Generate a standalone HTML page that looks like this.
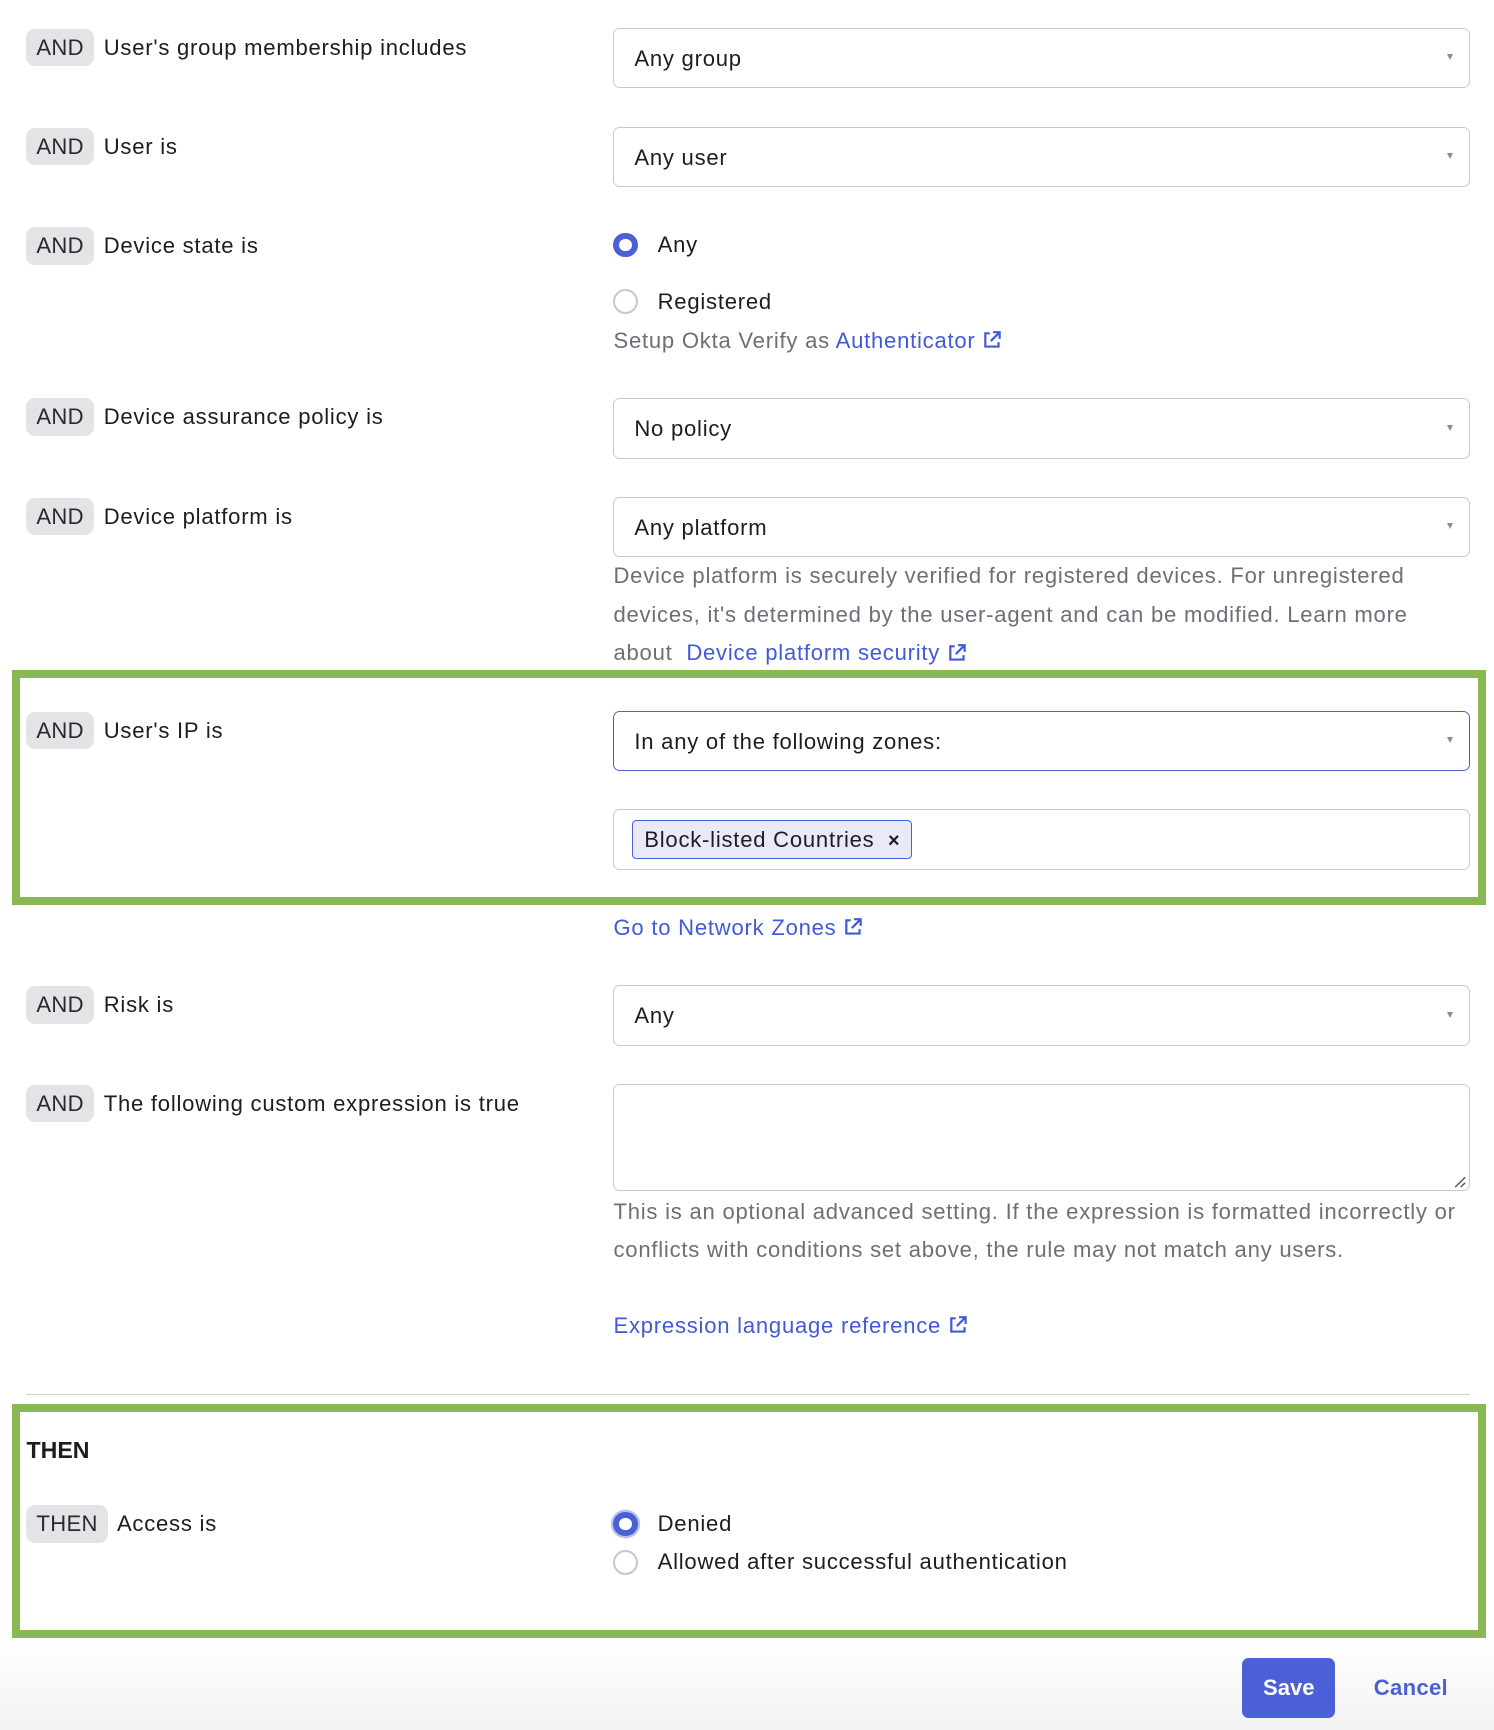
<!DOCTYPE html>
<html><head><meta charset="utf-8"><style>
html,body{margin:0;padding:0;background:#fff;}
body{width:1494px;height:1730px;overflow:hidden;position:relative;}
#w{position:absolute;left:0;top:0;width:1354px;height:1568px;zoom:1.10339;font-family:"Liberation Sans",sans-serif;color:#1d1d21;font-size:20px;letter-spacing:0.7px;}
.a{position:absolute;white-space:nowrap;}
.b{position:absolute;left:24px;height:34px;line-height:34px;padding:0 9px;background:#e4e4e6;border-radius:8px;color:#2a2a2e;font-size:20px;letter-spacing:0.3px;}
.l{position:absolute;left:94px;line-height:34px;white-space:nowrap;}
.s{position:absolute;left:556px;width:774px;height:53px;border:1px solid #c9c9ce;border-radius:6px;box-sizing:content-box;}
.s span{position:absolute;left:18px;top:0;line-height:55px;}
.s i{position:absolute;right:14px;top:23px;width:0;height:0;border-left:3px solid transparent;border-right:3px solid transparent;border-top:6px solid #8c8c94;}
.r{position:absolute;left:556px;width:19px;height:19px;border:2px solid #c6c6cc;border-radius:50%;}
.r.on{border:6px solid #4b5fd6;width:11px;height:11px;}
.g{color:#6e6e78;}
.k{color:#4259d8;}
.gb{position:absolute;left:11px;width:1321px;border:8px solid #88b955;}
svg.e{width:18px;height:18px;vertical-align:-2px;margin-left:6px;}
</style></head><body><div id="w">
<svg width="0" height="0" style="position:absolute"><defs><symbol id="ex" viewBox="0 0 18 18"><path d="M7 3H3v12h12v-4" fill="none" stroke="#4259d8" stroke-width="2"/><path d="M10 2h6v6M16 2L8 10" fill="none" stroke="#4259d8" stroke-width="2"/></symbol></defs></svg>

<div class="b" style="top:26px">AND</div><div class="l" style="top:26px">User's group membership includes</div>
<div class="s" style="top:25px"><span>Any group</span><i></i></div>

<div class="b" style="top:116px">AND</div><div class="l" style="top:116px">User is</div>
<div class="s" style="top:115px"><span>Any user</span><i></i></div>

<div class="b" style="top:206px">AND</div><div class="l" style="top:206px">Device state is</div>
<div class="r on" style="top:211px"></div><div class="a" style="left:596px;top:210px">Any</div>
<div class="r" style="top:262px"></div><div class="a" style="left:596px;top:262px">Registered</div>
<div class="a g" style="left:556px;top:297px">Setup Okta Verify as <span class="k">Authenticator<svg class="e"><use href="#ex"/></svg></span></div>

<div class="b" style="top:361px">AND</div><div class="l" style="top:361px">Device assurance policy is</div>
<div class="s" style="top:361px"><span>No policy</span><i></i></div>

<div class="b" style="top:451px">AND</div><div class="l" style="top:451px">Device platform is</div>
<div class="s" style="top:450px"><span>Any platform</span><i></i></div>
<div class="a g" style="left:556px;top:505px;line-height:35px;white-space:normal;width:735px">Device platform is securely verified for registered devices. For unregistered devices, it's determined by the user-agent and can be modified. Learn more about&nbsp; <span class="k" style="white-space:nowrap">Device platform security<svg class="e"><use href="#ex"/></svg></span></div>

<div class="gb" style="top:607px;height:199px"></div>
<div class="b" style="top:645px">AND</div><div class="l" style="top:645px">User's IP is</div>
<div class="s" style="top:644px;border-color:#4b5fd6"><span>In any of the following zones:</span><i></i></div>
<div class="s" style="top:733px;height:54px"></div>
<div class="a" style="left:573px;top:743px;height:34px;background:#e8eafa;border:1px solid #4b5fd6;border-radius:4px;line-height:34px;padding:0 10px;">Block-listed Countries <span style="font-weight:bold;font-size:18px;margin-left:6px">×</span></div>

<div class="a k" style="left:556px;top:829px">Go to Network Zones<svg class="e"><use href="#ex"/></svg></div>

<div class="b" style="top:894px">AND</div><div class="l" style="top:894px">Risk is</div>
<div class="s" style="top:893px"><span>Any</span><i></i></div>

<div class="b" style="top:983px">AND</div><div class="l" style="top:983px">The following custom expression is true</div>
<div class="s" style="top:982px;height:96px"><svg style="position:absolute;right:2px;bottom:2px" width="12" height="12"><path d="M11 2L2 11M11 7L7 11" stroke="#555" stroke-width="1.3"/></svg></div>
<div class="a g" style="left:556px;top:1081px;line-height:35px;white-space:normal;width:775px">This is an optional advanced setting. If the expression is formatted incorrectly or conflicts with conditions set above, the rule may not match any users.</div>
<div class="a k" style="left:556px;top:1190px">Expression language reference<svg class="e"><use href="#ex"/></svg></div>

<div class="a" style="left:24px;top:1263px;width:1308px;height:1px;background:#d4d4d8"></div>

<div class="gb" style="top:1272px;height:198px"></div>
<div class="a" style="left:24px;top:1302px;font-weight:bold;font-size:21px;letter-spacing:0">THEN</div>
<div class="b" style="top:1364px">THEN</div><div class="l" style="left:106px;top:1364px">Access is</div>
<div class="r on" style="top:1370px;box-shadow:0 0 0 2px #b9c1f0"></div><div class="a" style="left:596px;top:1369px">Denied</div>
<div class="r" style="top:1405px"></div><div class="a" style="left:596px;top:1404px">Allowed after successful authentication</div>

<div class="a" style="left:0;top:1490px;width:1354px;height:78px;background:linear-gradient(#fff,#f2f2f3)"></div>
<div class="a" style="left:1126px;top:1503px;width:84px;height:54px;background:#4b5fd6;border-radius:6px;color:#fff;font-weight:bold;line-height:54px;text-align:center;letter-spacing:0">Save</div>
<div class="a k" style="left:1245px;top:1518px;font-weight:bold;color:#4b5fd6;letter-spacing:0.3px">Cancel</div>
</div></body></html>
